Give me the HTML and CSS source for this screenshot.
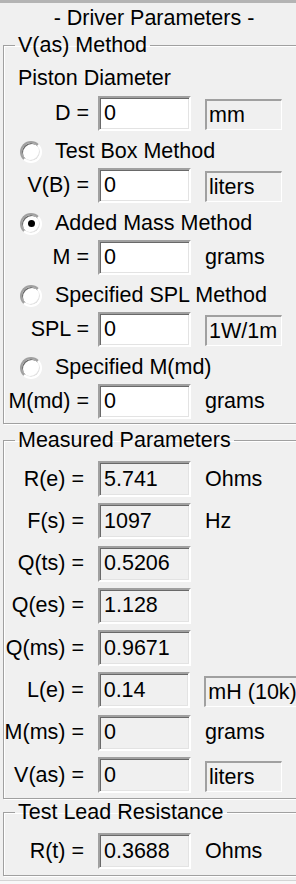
FILE: index.html
```html
<!DOCTYPE html>
<html lang="en">
<head>
    <meta charset="UTF-8">
    <meta name="viewport" content="width=device-width, initial-scale=1.0">
    <title>Driver Parameters</title>
    <link rel="stylesheet" href="styles.css">
</head>
<body>
    <div class="panel">
        <div class="title">- Driver Parameters -</div>

        <fieldset class="group method">
            <legend>V(as) Method</legend>
            <div class="line">Piston Diameter</div>
            <div class="row">
                <span class="lbl">D =</span>
                <span class="field edit">0</span>
                <span class="unit box">mm</span>
            </div>
            <div class="opt"><span class="radio"></span>Test Box Method</div>
            <div class="row">
                <span class="lbl">V(B) =</span>
                <span class="field edit">0</span>
                <span class="unit box">liters</span>
            </div>
            <div class="opt"><span class="radio on"><span class="dot"></span></span>Added Mass Method</div>
            <div class="row">
                <span class="lbl">M =</span>
                <span class="field edit">0</span>
                <span class="unit">grams</span>
            </div>
            <div class="opt"><span class="radio"></span>Specified SPL Method</div>
            <div class="row">
                <span class="lbl">SPL =</span>
                <span class="field edit">0</span>
                <span class="unit box">1W/1m</span>
            </div>
            <div class="opt"><span class="radio"></span>Specified M(md)</div>
            <div class="row">
                <span class="lbl">M(md) =</span>
                <span class="field edit">0</span>
                <span class="unit">grams</span>
            </div>
        </fieldset>

        <fieldset class="group measured">
            <legend>Measured Parameters</legend>
            <div class="row">
                <span class="lbl">R(e) =</span>
                <span class="field">5.741</span>
                <span class="unit">Ohms</span>
            </div>
            <div class="row">
                <span class="lbl">F(s) =</span>
                <span class="field">1097</span>
                <span class="unit">Hz</span>
            </div>
            <div class="row">
                <span class="lbl">Q(ts) =</span>
                <span class="field">0.5206</span>
            </div>
            <div class="row">
                <span class="lbl">Q(es) =</span>
                <span class="field">1.128</span>
            </div>
            <div class="row">
                <span class="lbl">Q(ms) =</span>
                <span class="field">0.9671</span>
            </div>
            <div class="row">
                <span class="lbl">L(e) =</span>
                <span class="field">0.14</span>
                <span class="unit box wide">mH (10k)</span>
            </div>
            <div class="row">
                <span class="lbl">M(ms) =</span>
                <span class="field">0</span>
                <span class="unit">grams</span>
            </div>
            <div class="row">
                <span class="lbl">V(as) =</span>
                <span class="field">0</span>
                <span class="unit box">liters</span>
            </div>
        </fieldset>

        <fieldset class="group lead">
            <legend>Test Lead Resistance</legend>
            <div class="row">
                <span class="lbl">R(t) =</span>
                <span class="field">0.3688</span>
                <span class="unit">Ohms</span>
            </div>
        </fieldset>

        <div class="footer"></div>
    </div>
</body>
</html>
```

FILE: styles.css
```css
/* Classic dialog look */
html, body {
    margin: 0;
    padding: 0;
    overflow: hidden;
}
body {
    background: #f0f0f0;
    color: #000;
    font-family: 'Liberation Sans', Arial, sans-serif;
    font-size: 21.5px;
}
.panel {
    width: 308px;
    border-top: 3px solid #b4b4b4;
}
.title {
    height: 30px;
    line-height: 30px;
    text-align: center;
}

/* Group boxes */
.group {
    margin: 0 3px;
    padding: 0;
    min-width: 0;
    border: 1px solid #a0a0a0;
    box-shadow: inset 1px 1px 0 #fff, 1px 1px 0 #fff;
}
.group legend {
    margin-left: 11px;
    padding: 0 3px;
    line-height: 25px;
}
.method {
    padding: 3px 0 4px;
}
.measured {
    margin-top: 4px;
    padding: 8px 0 5px;
}
.measured .row + .row {
    margin-top: 6.3px;
}
.lead {
    margin-top: 1px;
    padding: 8px 0 6px;
}

/* Rows */
.line {
    height: 35px;
    display: flex;
    align-items: center;
    padding-left: 14px;
}
.opt {
    height: 37px;
    box-sizing: border-box;
    padding: 4px 0 0 16px;
    display: flex;
    align-items: center;
    gap: 13px;
}
.row {
    height: 35px;
    display: flex;
    align-items: center;
}
.measured .row, .lead .row {
    height: 36px;
}
.lbl {
    width: 94px;
    box-sizing: border-box;
    padding-right: 9px;
    text-align: right;
    white-space: nowrap;
}
.measured .lbl, .lead .lbl {
    padding-right: 14px;
}
.field {
    width: 93px;
    height: 100%;
    box-sizing: border-box;
    display: flex;
    align-items: center;
    padding-left: 4px;
    border: 2px solid;
    border-color: #a0a0a0 #fff #fff #a0a0a0;
    box-shadow: inset 1px 1px 0 #696969, inset -1px -1px 0 #e3e3e3;
    background: #f0f0f0;
}
.field.edit {
    background: #fff;
}
.unit {
    margin-left: 14px;
    white-space: nowrap;
}
.unit.box {
    width: 77px;
    height: 31px;
    box-sizing: border-box;
    align-self: flex-end;
    margin-bottom: 1px;
    display: flex;
    align-items: center;
    padding-left: 2px;
    border-style: solid;
    border-width: 2px 1px 1px 2px;
    border-color: #a0a0a0 #fff #fff #a0a0a0;
    overflow: hidden;
}
.unit.wide {
    width: 100px;
}

/* Radio buttons */
.radio {
    width: 22px;
    height: 22px;
    flex: none;
    box-sizing: border-box;
    border-radius: 50%;
    border: 2px solid;
    border-color: #a0a0a0 #fff #fff #a0a0a0;
    box-shadow: inset 1px 1px 0 #696969, inset -1px -1px 0 #e3e3e3;
    background: #fff;
    display: flex;
    align-items: center;
    justify-content: center;
}
.dot {
    width: 7px;
    height: 7px;
    border-radius: 50%;
    background: #000;
}

.footer {
    margin-top: 4px;
    height: 20px;
    border-top: 1px solid #d4d4d4;
    background: #f8f8f8;
}
```
